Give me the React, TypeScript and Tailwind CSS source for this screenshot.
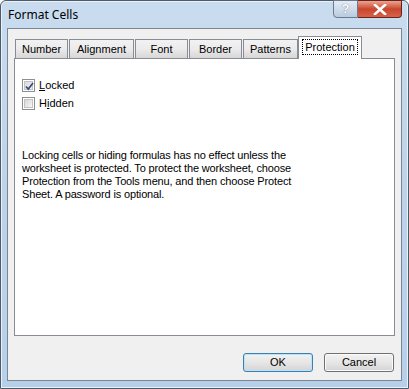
import React from "react";

const TABS = ["Number", "Alignment", "Font", "Border", "Patterns", "Protection"];
const TAB_W = [53, 65, 53, 53, 55, 64];

const font = { fontFamily: "Tahoma, 'Liberation Sans', Arial, sans-serif" };

function Checkbox({ checked, label, accessKey }: { checked: boolean; label: string; accessKey: number }) {
  return (
    <div className="flex items-center h-[18px]">
      <div className="w-[13px] h-[13px] border border-[#8e8f8f] bg-white p-[1px]">
        <div className="relative w-full h-full border border-[#c3c3c3] bg-gradient-to-br from-[#d9d9d9] to-[#f6f6f6]">
          {checked && (
            <svg className="absolute -left-[1px] -top-[1px]" width="11" height="11" viewBox="0 0 11 11">
              <path d="M2 5.5 L4.3 8 L9 2" fill="none" stroke="#3a4e86" strokeWidth="1.8" />
            </svg>
          )}
        </div>
      </div>
      <span className="ml-[4px] text-[11px] text-black">
        {label.slice(0, accessKey)}
        <span className="underline">{label[accessKey]}</span>
        {label.slice(accessKey + 1)}
      </span>
    </div>
  );
}

function Button({ label, primary }: { label: string; primary?: boolean }) {
  return (
    <div
      className={
        "w-[70px] h-[19px] rounded-[3px] border flex items-center justify-center text-[11px] text-black " +
        (primary
          ? "border-[#3c7fb1] shadow-[inset_0_0_0_1px_#b6e4f8] bg-gradient-to-b from-[#f2f2f2] via-[#e6e6e6] to-[#d4d4d4]"
          : "border-[#707070] shadow-[inset_0_0_0_1px_#fbfbfb] bg-gradient-to-b from-[#f2f2f2] via-[#e6e6e6] to-[#d4d4d4]")
      }
    >
      {label}
    </div>
  );
}

export default function App() {
  return (
    <div className="w-[409px] h-[389px] bg-white" style={font}>
      <div className="w-full h-full flex flex-col rounded-t-[6px] border border-[#4e5a66] bg-gradient-to-b from-[#c9dcef] via-[#bcd3ea] to-[#b7d0ea] shadow-[inset_0_0_0_1px_#e9f1fa]">
        {/* title bar */}
        <div className="h-[27px] flex items-start justify-between pl-[7px] pr-[6px]">
          <span className="mt-[5px] text-[12px] text-black" style={{ fontFamily: "'Noto Sans', sans-serif" }}>
            Format Cells
          </span>
          <div className="flex -mt-[1px]">
            <div className="w-[25px] h-[18px] rounded-bl-[4px] border border-[#6b7a8c] bg-gradient-to-b from-[#e4ecf5] via-[#cfdcea] to-[#b9cbe0] flex items-center justify-center text-[13px] font-bold text-white [text-shadow:0_0_1px_#4a5a6a]">
              ?
            </div>
            <div className="w-[44px] h-[18px] rounded-br-[4px] border border-l-0 border-[#6d2218] bg-gradient-to-b from-[#e8a493] via-[#c9452c] to-[#d4634a] flex items-center justify-center">
              <svg width="14" height="11" viewBox="0 0 14 11">
                <path d="M2 1 L12 10 M12 1 L2 10" stroke="#ffffff" strokeWidth="2.6" strokeLinecap="square" />
              </svg>
            </div>
          </div>
        </div>
        {/* client */}
        <div className="flex-1 mx-[6px] mb-[7px] border border-[#7c8591] bg-[#f0f0f0] flex flex-col">
          <div className="pt-[7px] pl-[6px] pr-[6px] flex flex-col">
            <div className="flex items-end h-[22px] pl-[1px] relative z-10">
              {TABS.map((t, i) => {
                const selected = i === TABS.length - 1;
                return (
                  <div
                    key={t}
                    style={{ width: TAB_W[i] }}
                    className={
                      selected
                        ? "h-[23px] -mb-[1px] ml-[-1px] bg-white border border-b-0 border-[#898c95] flex items-start justify-center pt-[2px]"
                        : "h-[19px] mr-[1px] border border-b-0 border-[#898c95] bg-gradient-to-b from-[#f2f2f2] via-[#ebebeb] to-[#d6d6d6] flex items-center justify-center text-[11px] text-black"
                    }
                  >
                    {selected ? (
                      <span className="text-[11px] text-black border border-dotted border-black px-[2px] leading-[14px]">{t}</span>
                    ) : (
                      t
                    )}
                  </div>
                );
              })}
            </div>
            <div className="h-[278px] bg-white border border-[#898c95] pl-[7px] pt-[17px]">
              <Checkbox checked label="Locked" accessKey={0} />
              <Checkbox checked={false} label="Hidden" accessKey={1} />
              <p className="mt-[37px] text-[11px] leading-[13px] tracking-[-0.15px] text-black whitespace-nowrap">
                Locking cells or hiding formulas has no effect unless the
                <br />
                worksheet is protected. To protect the worksheet, choose
                <br />
                Protection from the Tools menu, and then choose Protect
                <br />
                Sheet. A password is optional.
              </p>
            </div>
          </div>
          <div className="flex justify-end gap-[11px] pr-[7px] mt-[17px]">
            <Button label="OK" primary />
            <Button label="Cancel" />
          </div>
        </div>
      </div>
    </div>
  );
}
